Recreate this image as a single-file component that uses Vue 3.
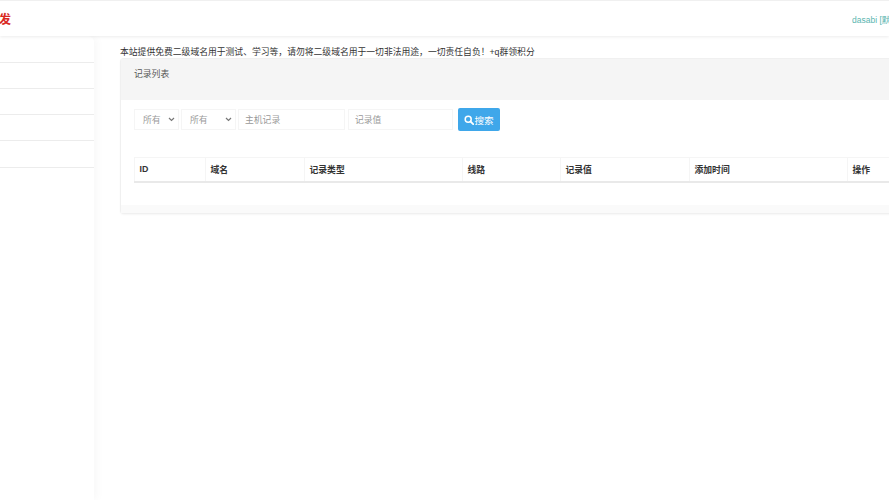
<script setup>
const menuRows = [0, 1, 2, 3, 4]
const columns = [
  { name: 'ID', width: 71 },
  { name: '域名', width: 99 },
  { name: '记录类型', width: 158 },
  { name: '线路', width: 98 },
  { name: '记录值', width: 129 },
  { name: '添加时间', width: 158 },
  { name: '操作', width: 120 }
]
</script>

<template>
  <div class="page">
    <header class="topbar">
      <div class="logo">发</div>
      <div class="user">dasabi [默认]</div>
    </header>
    <div class="body">
      <aside class="sidebar">
        <div v-for="row in menuRows" :key="row" class="menu-row"></div>
      </aside>
      <main class="content">
        <p class="notice">本站提供免费二级域名用于测试、学习等，请勿将二级域名用于一切非法用途，一切责任自负！+q群领积分</p>
        <section class="panel">
          <div class="panel-heading">记录列表</div>
          <div class="panel-body">
            <form class="search" @submit.prevent>
              <div class="select small">
                <span>所有</span>
                <svg width="7" height="5" viewBox="0 0 7 5"><path d="M1 1l2.5 2.5L6 1" fill="none" stroke="#777" stroke-width="1.2" /></svg>
              </div>
              <div class="select wide">
                <span>所有</span>
                <svg width="7" height="5" viewBox="0 0 7 5"><path d="M1 1l2.5 2.5L6 1" fill="none" stroke="#777" stroke-width="1.2" /></svg>
              </div>
              <input class="field host" placeholder="主机记录" />
              <input class="field value" placeholder="记录值" />
              <button class="btn-search" type="submit">
                <svg width="10" height="10" viewBox="0 0 10 10"><circle cx="4.2" cy="4.2" r="3" fill="none" stroke="#fff" stroke-width="1.5" /><path d="M6.5 6.5L9.2 9.2" stroke="#fff" stroke-width="1.8" stroke-linecap="round" /></svg>搜索
              </button>
            </form>
            <table class="records">
              <colgroup>
                <col v-for="col in columns" :key="col.name" :style="{ width: col.width + 'px' }" />
              </colgroup>
              <thead>
                <tr>
                  <th v-for="col in columns" :key="col.name">{{ col.name }}</th>
                </tr>
              </thead>
            </table>
          </div>
          <div class="panel-footer"></div>
        </section>
      </main>
    </div>
  </div>
</template>

<style scoped>
.page {
  width: 889px;
  height: 500px;
  overflow: hidden;
  background: #fff;
  color: #333;
  font-family: "Liberation Sans", "Noto Sans CJK SC", sans-serif;
  font-size: 8.8px;
}

.topbar {
  display: flex;
  align-items: center;
  justify-content: space-between;
  height: 35px;
  background: #fff;
  border-top: 1px solid #f0f0f0;
  box-shadow: 0 1px 3px rgba(0, 0, 0, .08);
  position: relative;
}

.logo {
  margin-left: -1px;
  color: #d9291f;
  font-size: 12px;
  font-weight: 700;
}

.user {
  width: 37px;
  flex: none;
  overflow: hidden;
  white-space: nowrap;
  color: #5bb5b0;
  font-size: 8.5px;
}

.body {
  display: flex;
}

.sidebar {
  flex: none;
  width: 94px;
  height: 464px;
  background: #fff;
  border-top-right-radius: 6px;
  box-shadow: 3px 0 8px rgba(0, 0, 0, .03);
}

.menu-row {
  height: 25.2px;
  border-bottom: 1px solid #ececec;
}

.menu-row:first-child {
  height: 25.8px;
}

.content {
  flex: none;
  width: 800px;
  margin-left: 26px;
}

.notice {
  margin: 10px 0 0;
  height: 12px;
  line-height: 12px;
  font-size: 8.8px;
  white-space: nowrap;
  color: #333;
}

.panel {
  background: #fff;
  border: 1px solid #f0f0f0;
  border-right: none;
  border-radius: 4px 0 0 4px;
  box-shadow: 0 1px 2px rgba(0, 0, 0, .04);
}

.panel-heading {
  height: 41px;
  padding: 9px 13px 0;
  box-sizing: border-box;
  line-height: 12px;
  background: #f5f5f5;
  color: #555;
  font-size: 8.8px;
}

.panel-body {
  padding: 8px 13px 0;
  height: 105px;
  box-sizing: border-box;
}

.search {
  display: flex;
  align-items: center;
  height: 23px;
}

.select,
.field {
  box-sizing: border-box;
  height: 21px;
  background: #fff;
  border: 1px solid #f5f5f5;
  color: #999;
  font-size: 8.8px;
  font-family: inherit;
}

.select {
  display: flex;
  align-items: center;
  justify-content: space-between;
  padding: 0 3px 0 8px;
  margin-right: 2px;
}

.select.small {
  width: 45px;
}

.select.wide {
  width: 55px;
}

.field {
  padding: 0 6px;
  outline: none;
}

.field::placeholder {
  color: #999;
}

.field.host {
  width: 107px;
  margin-right: 3px;
}

.field.value {
  width: 105px;
  margin-right: 5px;
}

.btn-search {
  display: flex;
  align-items: center;
  justify-content: center;
  width: 42px;
  height: 23px;
  padding: 0;
  background: #3fa7ea;
  border: none;
  border-radius: 2px;
  color: #fff;
  font-size: 9.6px;
  font-family: inherit;
}

.records {
  margin-top: 26px;
  table-layout: fixed;
  width: 833px;
  border-collapse: collapse;
}

.records th {
  height: 24px;
  padding: 0 0 0 4.5px;
  box-sizing: border-box;
  text-align: left;
  color: #333;
  font-size: 8.8px;
  border: 1px solid #f5f5f5;
  border-bottom: 2px solid #e9e9e9;
}

.panel-footer {
  height: 8px;
  background: #fafafa;
}
</style>
